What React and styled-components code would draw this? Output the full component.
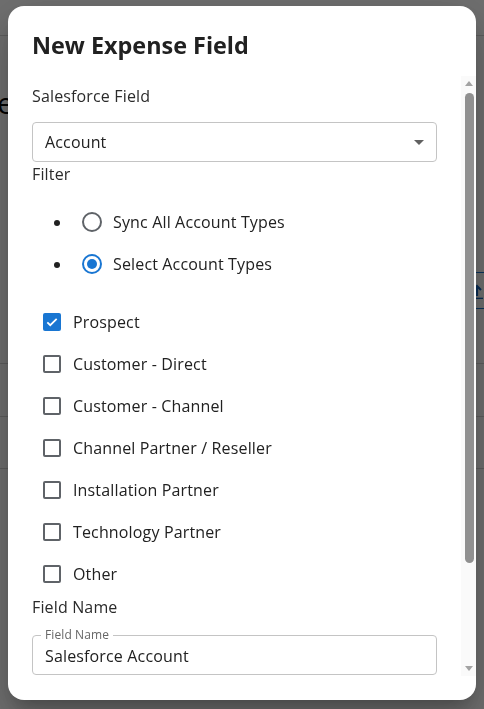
import React from "react";
import styled, { createGlobalStyle } from "styled-components";

const Global = createGlobalStyle`
  html, body { margin: 0; padding: 0; height: 100%; }
  body {
    font-family: "Open Sans", "Noto Sans", sans-serif;
    background: #ffffff;
    overflow: hidden;
  }
  * { box-sizing: border-box; }
`;

/* ---------- underlying page ---------- */
const Page = styled.div`
  height: 100vh;
  background: #ffffff;
  display: flex;
  flex-direction: column;
`;

const AppBar = styled.div`
  height: 36px;
  border-bottom: 1px solid #d6d6d6;
  flex-shrink: 0;
`;

const PageTitle = styled.h1`
  margin: 47px 0 0 -3px;
  font-size: 30px;
  line-height: 40px;
  font-weight: 400;
  color: #000;
`;

const Toolbar = styled.div`
  margin-top: 149px;
  display: flex;
  justify-content: flex-end;
`;

const UploadButton = styled.div`
  width: 22px;
  height: 37px;
  border-top: 1px solid #1976d2;
  border-bottom: 1px solid #1976d2;
  border-left: 1px solid #1976d2;
  display: flex;
  align-items: center;
  justify-content: flex-end;
  padding-right: 1px;
  color: #1565c0;
`;

const TableRow = styled.div`
  height: ${(p) => p.$h}px;
  border-bottom: 1px solid #d6d6d6;
  flex-shrink: 0;
`;

const Backdrop = styled.div`
  position: fixed;
  inset: 0;
  background: rgba(0, 0, 0, 0.565);
`;

/* ---------- dialog ---------- */
const Dialog = styled.div`
  position: fixed;
  left: 8px;
  right: 8px;
  top: 6px;
  bottom: 9px;
  background: #fff;
  border-radius: 16px;
  box-shadow: 0 11px 15px -7px rgba(0, 0, 0, 0.2),
    0 24px 38px 3px rgba(0, 0, 0, 0.14), 0 9px 46px 8px rgba(0, 0, 0, 0.12);
  display: flex;
  flex-direction: column;
  padding-bottom: 24px;
  overflow: hidden;
`;

const Title = styled.h2`
  margin: 0;
  padding: 23px 24px 0;
  height: 70px;
  flex-shrink: 0;
  font-size: 23.4px;
  line-height: 33px;
  font-weight: 700;
  color: #212121;
`;

const Body = styled.div`
  flex: 1;
  min-height: 0;
  display: flex;
`;

const Content = styled.div`
  flex: 1;
  min-width: 0;
  overflow: hidden;
  padding: 8px 24px 0;
  letter-spacing: 0.15px;
`;

const ScrollBar = styled.div`
  width: 15px;
  flex-shrink: 0;
  background: #fafafa;
  display: flex;
  flex-direction: column;
  align-items: center;
`;

const ScrollArrow = styled.div`
  height: 15px;
  width: 15px;
  display: flex;
  align-items: center;
  justify-content: center;
  &::after {
    content: "";
    width: 0;
    height: 0;
    border-left: 4.5px solid transparent;
    border-right: 4.5px solid transparent;
    ${(p) =>
      p.$down
        ? "border-top: 5px solid #a3a3a3;"
        : "border-bottom: 5px solid #a3a3a3;"}
  }
`;

const ScrollTrack = styled.div`
  flex: 1;
  width: 100%;
  display: flex;
  justify-content: center;
  padding-top: 2px;
`;

const ScrollThumb = styled.div`
  width: 9px;
  height: 470px;
  border-radius: 5px;
  background: #909090;
  margin-left: 1px;
`;

const FieldLabel = styled.div`
  font-size: 16px;
  line-height: 24px;
  color: #2b2b2b;
  margin-bottom: ${(p) => p.$mb || 0}px;
`;

const SelectBox = styled.div`
  height: 40px;
  border: 1px solid #c4c4c4;
  border-radius: 4px;
  display: flex;
  align-items: center;
  justify-content: space-between;
  padding: 0 12px 0 12px;
  font-size: 16px;
  color: #212121;
`;

const Caret = styled.span`
  width: 0;
  height: 0;
  border-left: 5.5px solid transparent;
  border-right: 5.5px solid transparent;
  border-top: 5.5px solid #616161;
`;

const RadioList = styled.ul`
  margin: 15px 0 16px;
  padding-left: 40px;
`;

const RadioItem = styled.li`
  height: 42px;
  line-height: 42px;
  font-size: 16px;
  color: #212121;
`;

const RadioWrap = styled.span`
  width: 40px;
  height: 40px;
  display: inline-flex;
  align-items: center;
  justify-content: center;
  vertical-align: middle;
  margin-right: 1px;
  margin-top: -3px;
`;

const RadioCircle = styled.span`
  width: 20px;
  height: 20px;
  border-radius: 50%;
  border: 2px solid ${(p) => (p.$on ? "#1976d2" : "#5f6368")};
  display: flex;
  align-items: center;
  justify-content: center;
  &::after {
    content: "";
    width: 10px;
    height: 10px;
    border-radius: 50%;
    background: ${(p) => (p.$on ? "#1976d2" : "transparent")};
  }
`;

const CheckList = styled.div`
  display: flex;
  flex-direction: column;
`;

const CheckRow = styled.label`
  height: 42px;
  display: flex;
  align-items: center;
  padding-left: 11px;
  gap: 12px;
  font-size: 16px;
  color: #212121;
`;

const Box = styled.span`
  width: 18px;
  height: 18px;
  border-radius: 2px;
  border: ${(p) => (p.$on ? "none" : "2px solid #5f6368")};
  background: ${(p) => (p.$on ? "#1976d2" : "#fff")};
  display: flex;
  align-items: center;
  justify-content: center;
  flex-shrink: 0;
`;

const Outlined = styled.div`
  position: relative;
  margin-top: 16px;
  height: 40px;
  border: 1px solid #c4c4c4;
  border-radius: 4px;
  padding: 2px 12px 0;
  display: flex;
  align-items: center;
  font-size: 16px;
  color: #212121;
`;

const FloatLabel = styled.span`
  position: absolute;
  top: -8px;
  left: 8px;
  padding: 0 4px;
  background: #fff;
  font-size: 12px;
  line-height: 14px;
  color: #666;
  letter-spacing: 0.1px;
`;

const checks = [
  ["Prospect", true],
  ["Customer - Direct", false],
  ["Customer - Channel", false],
  ["Channel Partner / Reseller", false],
  ["Installation Partner", false],
  ["Technology Partner", false],
  ["Other", false],
];

export default function App() {
  return (
    <>
      <Global />
      <Page>
        <AppBar />
        <PageTitle>e</PageTitle>
        <Toolbar>
          <UploadButton>
            <svg width="12" height="16" viewBox="0 0 12 16" fill="none" stroke="currentColor" strokeWidth="2.2">
              <path d="M6 13V3M2 7l4-4 4 4" />
              <path d="M0 15.5h12" strokeWidth="1.6" />
            </svg>
          </UploadButton>
        </Toolbar>
        <TableRow $h={55} />
        <TableRow $h={53} />
        <TableRow $h={52} />
      </Page>
      <Backdrop />
      <Dialog>
        <Title>New Expense Field</Title>
        <Body>
          <Content>
            <FieldLabel $mb={14}>Salesforce Field</FieldLabel>
            <SelectBox>
              <span>Account</span>
              <Caret />
            </SelectBox>
            <FieldLabel>Filter</FieldLabel>
            <RadioList>
              <RadioItem>
                <RadioWrap><RadioCircle /></RadioWrap>
                Sync All Account Types
              </RadioItem>
              <RadioItem>
                <RadioWrap><RadioCircle $on /></RadioWrap>
                Select Account Types
              </RadioItem>
            </RadioList>
            <CheckList>
              {checks.map(([label, on]) => (
                <CheckRow key={label}>
                  <Box $on={on}>
                    {on && (
                      <svg width="14" height="14" viewBox="0 0 24 24" fill="none" stroke="#fff" strokeWidth="3">
                        <path d="M4 12.5l5 5L20 6.5" />
                      </svg>
                    )}
                  </Box>
                  {label}
                </CheckRow>
              ))}
            </CheckList>
            <FieldLabel>Field Name</FieldLabel>
            <Outlined>
              <FloatLabel>Field Name</FloatLabel>
              Salesforce Account
            </Outlined>
          </Content>
          <ScrollBar>
            <ScrollArrow />
            <ScrollTrack>
              <ScrollThumb />
            </ScrollTrack>
            <ScrollArrow $down />
          </ScrollBar>
        </Body>
      </Dialog>
    </>
  );
}
